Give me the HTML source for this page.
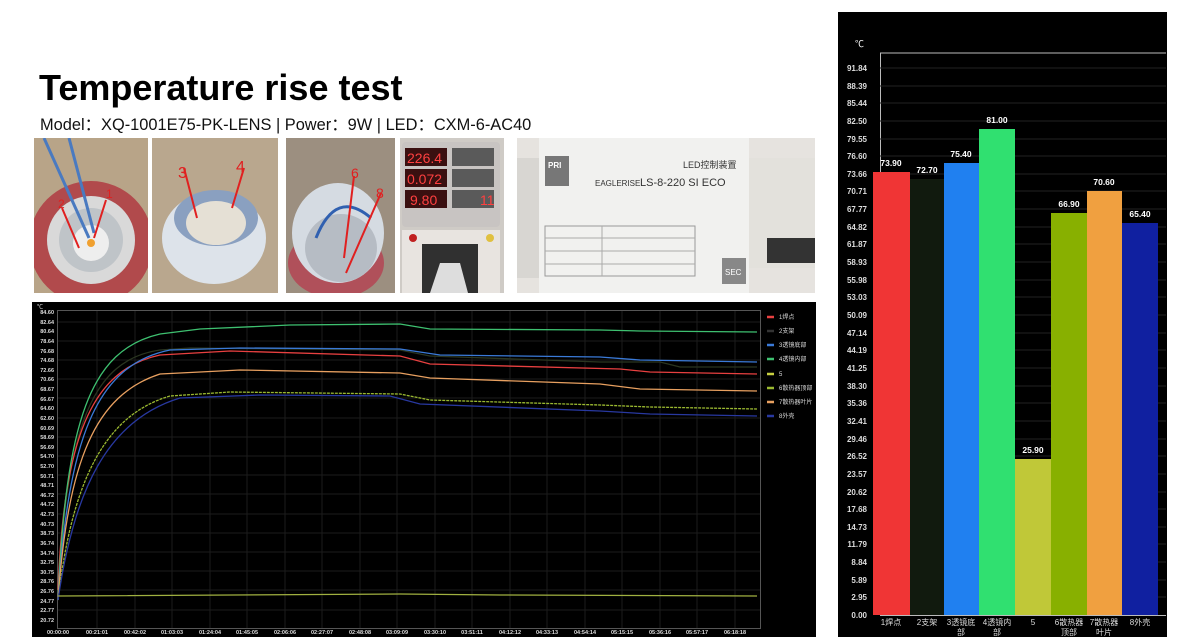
<!DOCTYPE html>
<html><head><meta charset="utf-8"><style>
*{margin:0;padding:0;box-sizing:border-box}
body{width:1200px;height:644px;background:#fff;position:relative;overflow:hidden;font-family:"Liberation Sans","Noto Sans CJK SC",sans-serif}
.t{position:absolute;left:39px;top:67px;font-size:36px;font-weight:bold;color:#000;letter-spacing:0px}
.s{position:absolute;left:40px;top:111px;font-size:16.4px;color:#111}
.p{position:absolute;top:138px;height:155px;overflow:hidden}
svg text{font-family:"Liberation Sans","Noto Sans CJK SC",sans-serif}
</style></head><body>
<div class="t">Temperature rise test</div>
<div class="s">Model：XQ-1001E75-PK-LENS | Power：9W | LED：CXM-6-AC40</div>

<div class="p" style="left:34px;width:114px;background:#b8a488">
<svg width="114" height="155"><circle cx="57" cy="105" r="62" fill="#b14a4c"/><circle cx="57" cy="102" r="44" fill="#d9d9d9"/><circle cx="57" cy="102" r="32" fill="#bfc4c8"/><circle cx="57" cy="105" r="18" fill="#eee"/><circle cx="57" cy="105" r="4" fill="#f0a030"/><path d="M10 0 L55 100 M35 0 L60 95" stroke="#4a7ac0" stroke-width="3" fill="none"/><path d="M28 70 L45 110 M72 62 L60 100" stroke="#e02020" stroke-width="2"/><text x="24" y="70" fill="#e02020" font-size="12">2</text><text x="72" y="60" fill="#e02020" font-size="12">1</text></svg></div>
<div class="p" style="left:152px;width:126px;background:#b9a78e">
<svg width="126" height="155"><ellipse cx="62" cy="100" rx="52" ry="46" fill="#dde3ea"/><ellipse cx="64" cy="80" rx="42" ry="28" fill="#8aa0c0"/><ellipse cx="64" cy="85" rx="30" ry="22" fill="#e5e0d5"/><path d="M32 30 L45 80 M92 30 L80 70" stroke="#e02020" stroke-width="2"/><text x="26" y="40" fill="#e02020" font-size="16">3</text><text x="84" y="34" fill="#e02020" font-size="16">4</text></svg></div>
<div class="p" style="left:286px;width:109px;background:#9c8f80">
<svg width="109" height="155"><ellipse cx="50" cy="125" rx="48" ry="35" fill="#b0505a"/><ellipse cx="52" cy="95" rx="46" ry="50" fill="#d5dbe2"/><ellipse cx="55" cy="110" rx="36" ry="34" fill="#b6bcc4"/><path d="M30 100 Q50 50 85 80" stroke="#3060b0" stroke-width="3" fill="none"/><path d="M68 38 L58 120 M95 55 L60 135" stroke="#e02020" stroke-width="2"/><text x="65" y="40" fill="#e02020" font-size="14">6</text><text x="90" y="60" fill="#e02020" font-size="14">8</text></svg></div>
<div class="p" style="left:400px;width:104px;background:#cfcbc6">
<svg width="104" height="155"><rect x="2" y="4" width="98" height="85" rx="4" fill="#c8c4c2"/><rect x="5" y="10" width="42" height="18" fill="#3a1010"/><rect x="5" y="31" width="42" height="18" fill="#3a1010"/><rect x="5" y="52" width="42" height="18" fill="#3a1010"/><rect x="52" y="10" width="42" height="18" fill="#5a5a5a"/><rect x="52" y="31" width="42" height="18" fill="#5a5a5a"/><rect x="52" y="52" width="42" height="18" fill="#5a5a5a"/><text x="7" y="25" fill="#ff4040" font-size="14" font-family="Liberation Mono">226.4</text><text x="7" y="46" fill="#ff4040" font-size="14" font-family="Liberation Mono">0.072</text><text x="10" y="67" fill="#ff4040" font-size="14" font-family="Liberation Mono">9.80</text><text x="80" y="67" fill="#ff4040" font-size="14" font-family="Liberation Mono">11</text><rect x="2" y="92" width="98" height="63" fill="#e8e4e0"/><circle cx="13" cy="100" r="4" fill="#c02020"/><circle cx="90" cy="100" r="4" fill="#e0c040"/><rect x="22" y="106" width="56" height="49" fill="#303030"/><path d="M30 155 L40 125 L60 125 L68 155" fill="#ddd"/></svg></div>
<div class="p" style="left:517px;width:298px;background:#eee">
<svg width="298" height="155"><rect x="0" y="0" width="298" height="155" fill="#e6e3df"/><rect x="22" y="0" width="210" height="155" fill="#f1f1ef"/><rect x="0" y="20" width="22" height="120" fill="#d8d6d2"/><rect x="232" y="20" width="66" height="110" fill="#e3e1dc"/><rect x="250" y="100" width="48" height="25" fill="#333"/><rect x="28" y="18" width="24" height="30" fill="#777"/><text x="31" y="30" fill="#fff" font-size="8" font-weight="bold">PRI</text><text x="78" y="48" fill="#333" font-size="8">EAGLERISE</text><text x="123" y="48" fill="#333" font-size="11">LS-8-220 SI ECO</text><text x="166" y="30" fill="#333" font-size="9">LED控制装置</text><rect x="28" y="88" width="150" height="50" fill="none" stroke="#999" stroke-width="1"/><path d="M28 100 H178 M28 113 H178 M28 126 H178 M85 88 V138" stroke="#aaa"/><rect x="205" y="120" width="24" height="26" fill="#888"/><text x="208" y="137" fill="#fff" font-size="8">SEC</text></svg></div>

<svg style="position:absolute;left:32px;top:302px" width="784" height="335">
<rect width="784" height="335" fill="#000"/>
<g transform="translate(-32,-302)">
<rect x="57.5" y="310.5" width="703" height="318" fill="none" stroke="#555"/>
<g stroke="#1c1c1c" stroke-width="1">
<path d="M58 322H760M58 341H760M58 360H760M58 379H760M58 398H760M58 418H760M58 437H760M58 456H760M58 475H760M58 494H760M58 514H760M58 533H760M58 552H760M58 571H760M58 590H760M58 610H760"/>
<path d="M97 311V628M135 311V628M172 311V628M210 311V628M247 311V628M285 311V628M322 311V628M360 311V628M397 311V628M435 311V628M472 311V628M510 311V628M547 311V628M585 311V628M622 311V628M660 311V628M697 311V628M735 311V628"/>
</g>
<g fill="#ddd" font-size="5.5" font-weight="bold" text-anchor="end">
<text x="54" y="314">84.60</text><text x="54" y="324">82.64</text><text x="54" y="333">80.64</text><text x="54" y="343">78.64</text><text x="54" y="353">76.68</text><text x="54" y="362">74.68</text><text x="54" y="372">72.66</text><text x="54" y="381">70.66</text><text x="54" y="391">68.67</text><text x="54" y="401">66.67</text><text x="54" y="410">64.60</text><text x="54" y="420">62.60</text><text x="54" y="430">60.69</text><text x="54" y="439">58.69</text><text x="54" y="449">56.69</text><text x="54" y="458">54.70</text><text x="54" y="468">52.70</text><text x="54" y="478">50.71</text><text x="54" y="487">48.71</text><text x="54" y="497">46.72</text><text x="54" y="506">44.72</text><text x="54" y="516">42.73</text><text x="54" y="526">40.73</text><text x="54" y="535">38.73</text><text x="54" y="545">36.74</text><text x="54" y="555">34.74</text><text x="54" y="564">32.75</text><text x="54" y="574">30.75</text><text x="54" y="583">28.76</text><text x="54" y="593">26.76</text><text x="54" y="603">24.77</text><text x="54" y="612">22.77</text><text x="54" y="622">20.72</text>
</g>
<g fill="#ddd" font-size="5.5" font-weight="bold" text-anchor="middle">
<text x="58" y="634">00:00:00</text><text x="97" y="634">00:21:01</text><text x="135" y="634">00:42:02</text><text x="172" y="634">01:03:03</text><text x="210" y="634">01:24:04</text><text x="247" y="634">01:45:05</text><text x="285" y="634">02:06:06</text><text x="322" y="634">02:27:07</text><text x="360" y="634">02:48:08</text><text x="397" y="634">03:09:09</text><text x="435" y="634">03:30:10</text><text x="472" y="634">03:51:11</text><text x="510" y="634">04:12:12</text><text x="547" y="634">04:33:13</text><text x="585" y="634">04:54:14</text><text x="622" y="634">05:15:15</text><text x="660" y="634">05:36:16</text><text x="697" y="634">05:57:17</text><text x="735" y="634">06:18:18</text>
</g>
<g fill="none" stroke-width="1.3">
<path d="M58 600 C66 430 90 360 160 350 L190 348 L400 350 L430 356 L600 362 L660 362 L680 367 L757 367" stroke="#2a3520"/>
<path d="M58 590 C64 440 90 370 160 355 L230 351 L400 356 L430 364 L620 369 L650 372 L757 374" stroke="#e84040"/>
<path d="M58 600 C66 420 90 350 160 334 L200 329 L290 325 L400 324 L430 329 L600 330 L640 331 L757 332" stroke="#3ec070"/>
<path d="M58 600 C68 440 95 365 170 350 L240 348 L400 349 L440 355 L600 357 L640 360 L757 362" stroke="#3a7ad8"/>
<path d="M58 600 C68 460 95 395 160 374 L240 370 L400 373 L430 378 L600 384 L640 389 L757 391" stroke="#e8a060"/>
<path d="M58 600 C72 480 105 415 170 396 L230 392 L400 394 L430 400 L600 405 L650 407 L757 409" stroke="#9ab830" stroke-dasharray="3 1"/>
<path d="M58 600 C74 490 107 420 180 398 L260 395 L390 396 L420 404 L600 411 L650 414 L757 416" stroke="#2838a0"/>
<path d="M58 596 L400 594 L500 595 L757 596" stroke="#a0b040"/>
</g>
<g stroke-width="2.5">
<path d="M767 317h7" stroke="#e84040"/><path d="M767 331h7" stroke="#333"/><path d="M767 345h7" stroke="#3a7ad8"/><path d="M767 359h7" stroke="#3ec070"/><path d="M767 374h7" stroke="#c8d040"/><path d="M767 388h7" stroke="#9ab830"/><path d="M767 402h7" stroke="#e8a060"/><path d="M767 416h7" stroke="#2838a0"/>
</g>
<g fill="#ddd" font-size="6">
<text x="779" y="319">1焊点</text><text x="779" y="333">2支架</text><text x="779" y="347">3透镜底部</text><text x="779" y="361">4透镜内部</text><text x="779" y="376">5</text><text x="779" y="390">6散热器顶部</text><text x="779" y="404">7散热器叶片</text><text x="779" y="418">8外壳</text>
</g>
<text x="37" y="309" fill="#ddd" font-size="6">℃</text>
</g>
</svg>

<svg style="position:absolute;left:838px;top:12px" width="329" height="625">
<rect width="329" height="625" fill="#000"/>
<g transform="translate(-838,-12)">
<text x="855" y="47" fill="#fff" font-size="9">℃</text>
<path d="M880 53H1166M880.5 53V615.5H1166" stroke="#bbb" fill="none"/>
<g stroke="#222">
<path d="M880 68H1166M880 86H1166M880 103H1166M880 121H1166M880 139H1166M880 156H1166M880 174H1166M880 191H1166M880 209H1166M880 227H1166M880 244H1166M880 262H1166M880 280H1166M880 297H1166M880 315H1166M880 333H1166M880 350H1166M880 368H1166M880 386H1166M880 403H1166M880 421H1166M880 439H1166M880 456H1166M880 474H1166M880 492H1166M880 509H1166M880 527H1166M880 544H1166M880 562H1166M880 580H1166M880 597H1166"/>
</g>
<g fill="#ddd" font-size="8" font-weight="bold" text-anchor="end">
<text x="867" y="71">91.84</text><text x="867" y="89">88.39</text><text x="867" y="106">85.44</text><text x="867" y="124">82.50</text><text x="867" y="142">79.55</text><text x="867" y="159">76.60</text><text x="867" y="177">73.66</text><text x="867" y="194">70.71</text><text x="867" y="212">67.77</text><text x="867" y="230">64.82</text><text x="867" y="247">61.87</text><text x="867" y="265">58.93</text><text x="867" y="283">55.98</text><text x="867" y="300">53.03</text><text x="867" y="318">50.09</text><text x="867" y="336">47.14</text><text x="867" y="353">44.19</text><text x="867" y="371">41.25</text><text x="867" y="389">38.30</text><text x="867" y="406">35.36</text><text x="867" y="424">32.41</text><text x="867" y="442">29.46</text><text x="867" y="459">26.52</text><text x="867" y="477">23.57</text><text x="867" y="495">20.62</text><text x="867" y="512">17.68</text><text x="867" y="530">14.73</text><text x="867" y="547">11.79</text><text x="867" y="565">8.84</text><text x="867" y="583">5.89</text><text x="867" y="600">2.95</text><text x="867" y="618">0.00</text>
</g>
<rect x="873" y="172" width="37" height="443" fill="#f03535"/>
<rect x="910" y="179" width="34" height="436" fill="#111a0e"/>
<rect x="944" y="163" width="35" height="452" fill="#2080f0"/>
<rect x="979" y="129" width="36" height="486" fill="#30e070"/>
<rect x="1015" y="459" width="36" height="156" fill="#c0c838"/>
<rect x="1051" y="213" width="36" height="402" fill="#88b000"/>
<rect x="1087" y="191" width="35" height="424" fill="#f0a040"/>
<rect x="1122" y="223" width="36" height="392" fill="#1020a0"/>
<g fill="#fff" font-size="8.5" font-weight="bold" text-anchor="middle">
<text x="891" y="166">73.90</text><text x="927" y="173">72.70</text><text x="961" y="157">75.40</text><text x="997" y="123">81.00</text><text x="1033" y="453">25.90</text><text x="1069" y="207">66.90</text><text x="1104" y="185">70.60</text><text x="1140" y="217">65.40</text>
</g>
<g fill="#ddd" font-size="8" text-anchor="middle">
<text x="891" y="625">1焊点</text><text x="927" y="625">2支架</text><text x="961" y="625">3透镜底</text><text x="961" y="635">部</text><text x="997" y="625">4透镜内</text><text x="997" y="635">部</text><text x="1033" y="625">5</text><text x="1069" y="625">6散热器</text><text x="1069" y="635">顶部</text><text x="1104" y="625">7散热器</text><text x="1104" y="635">叶片</text><text x="1140" y="625">8外壳</text>
</g>
</g>
</svg>
</body></html>
